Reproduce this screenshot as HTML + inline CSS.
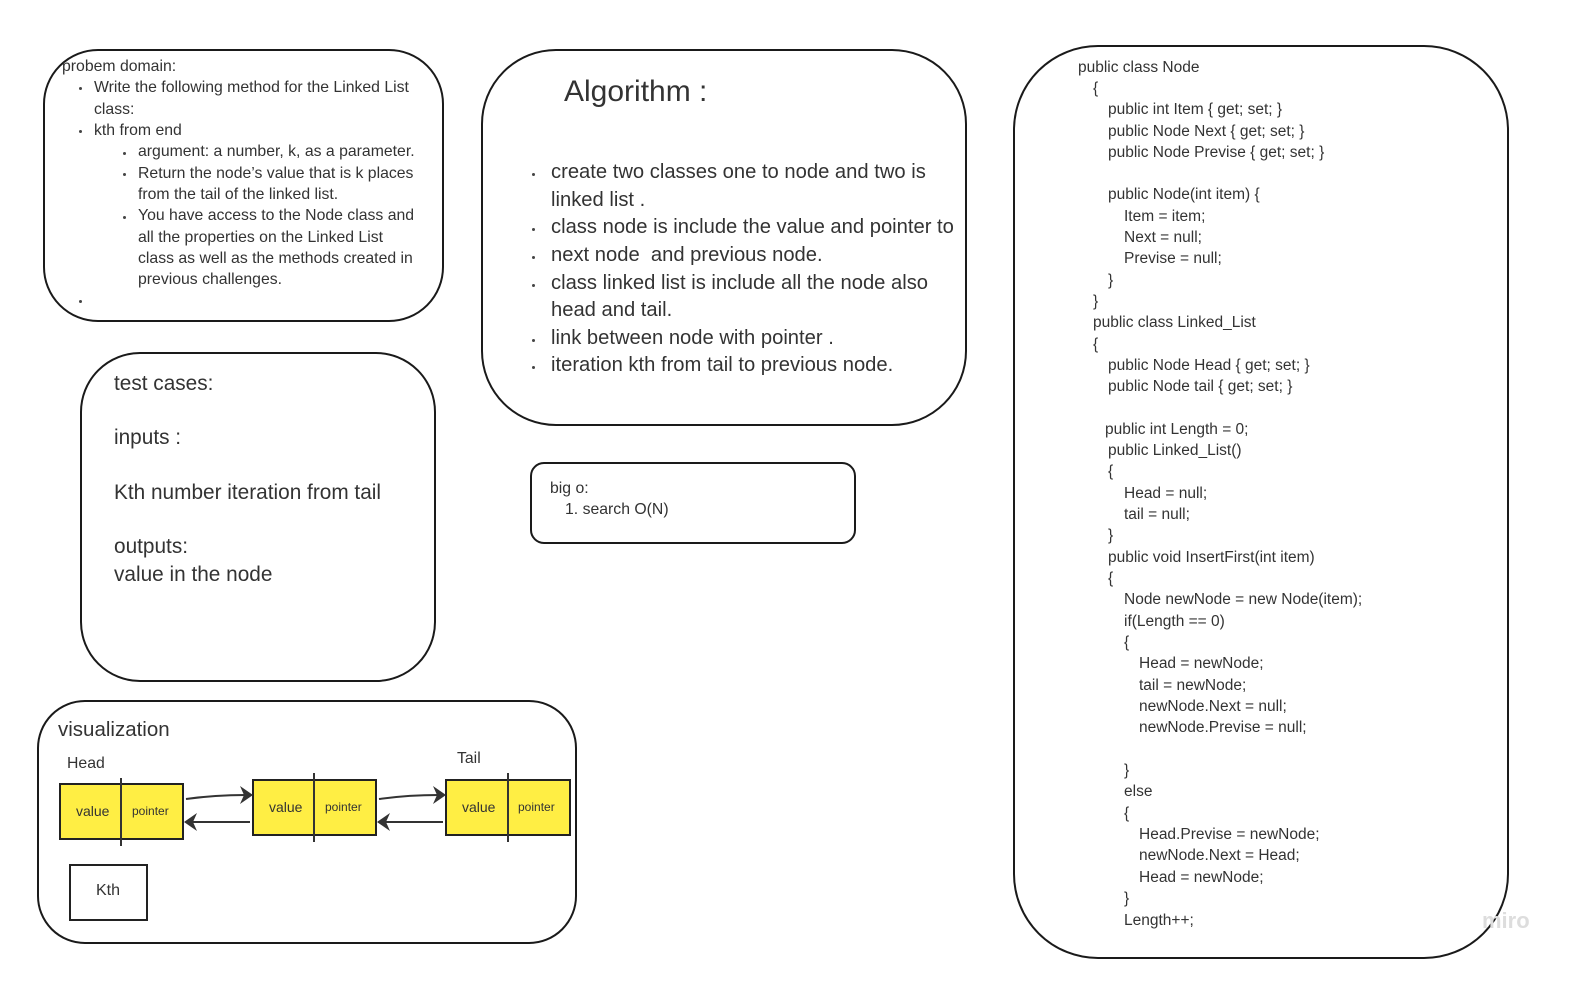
<!DOCTYPE html><html><head><style>
html,body{margin:0;padding:0;width:1591px;height:981px;overflow:hidden}
body{background:#fff;font-family:"Liberation Sans",sans-serif;color:#333}
#w{position:relative;width:1591px;height:981px;overflow:hidden}
.b{position:absolute;border:2px solid #1a1a1a;box-sizing:border-box}
.t{position:absolute;white-space:nowrap;line-height:1.15}
.c{font-size:15.5px;color:#333}
.s{font-size:15.8px}
.a{font-size:20.2px}
.e{font-size:20.8px}
.d{position:absolute;width:3px;height:3px;border-radius:50%;background:#444}
.cell{position:absolute;background:#ffee44;border:2px solid #222;box-sizing:border-box}
</style></head><body><div id="w">
<div class="b" style="left:43px;top:49px;width:401px;height:273px;border-radius:55px"></div>
<div class="b" style="left:481px;top:49px;width:486px;height:377px;border-radius:75px"></div>
<div class="b" style="left:1013px;top:45px;width:496px;height:914px;border-radius:85px"></div>
<div class="b" style="left:80px;top:352px;width:356px;height:330px;border-radius:60px"></div>
<div class="b" style="left:530px;top:462px;width:326px;height:82px;border-radius:14px"></div>
<div class="b" style="left:37px;top:700px;width:540px;height:244px;border-radius:48px"></div>

<div class="t s" style="left:62px;top:58px">probem domain:</div>
<div class="d" style="left:79px;top:87px"></div>
<div class="t s" style="left:94px;top:79px">Write the following method for the Linked List</div>
<div class="t s" style="left:94px;top:101px">class:</div>
<div class="d" style="left:79px;top:130px"></div>
<div class="t s" style="left:94px;top:122px">kth from end</div>
<div class="d" style="left:123px;top:152px"></div>
<div class="t s" style="left:138px;top:143px">argument: a number, k, as a parameter.</div>
<div class="d" style="left:123px;top:173px"></div>
<div class="t s" style="left:138px;top:165px">Return the node’s value that is k places</div>
<div class="t s" style="left:138px;top:186px">from the tail of the linked list.</div>
<div class="d" style="left:123px;top:216px"></div>
<div class="t s" style="left:138px;top:207px">You have access to the Node class and</div>
<div class="t s" style="left:138px;top:229px">all the properties on the Linked List</div>
<div class="t s" style="left:138px;top:250px">class as well as the methods created in</div>
<div class="t s" style="left:138px;top:271px">previous challenges.</div>
<div class="d" style="left:79px;top:300px"></div>

<div class="t" style="left:564px;top:75px;font-size:30px">Algorithm :</div>
<div class="d" style="left:532px;top:173px"></div>
<div class="t a" style="left:551px;top:161px">create two classes one to node and two is</div>
<div class="t a" style="left:551px;top:189px">linked list .</div>
<div class="d" style="left:532px;top:228px"></div>
<div class="t a" style="left:551px;top:216px">class node is include the value and pointer to</div>
<div class="d" style="left:532px;top:256px"></div>
<div class="t a" style="left:551px;top:244px">next node&nbsp; and previous node.</div>
<div class="d" style="left:532px;top:284px"></div>
<div class="t a" style="left:551px;top:272px">class linked list is include all the node also</div>
<div class="t a" style="left:551px;top:299px">head and tail.</div>
<div class="d" style="left:532px;top:339px"></div>
<div class="t a" style="left:551px;top:327px">link between node with pointer .</div>
<div class="d" style="left:532px;top:366px"></div>
<div class="t a" style="left:551px;top:354px">iteration kth from tail to previous node.</div>

<div class="t e" style="left:114px;top:372px">test cases:</div>
<div class="t e" style="left:114px;top:426px">inputs :</div>
<div class="t e" style="left:114px;top:481px">Kth number iteration from tail</div>
<div class="t e" style="left:114px;top:535px">outputs:</div>
<div class="t e" style="left:114px;top:563px">value in the node</div>

<div class="t s" style="left:550px;top:480px">big o:</div>
<div class="t s" style="left:565px;top:501px">1. search O(N)</div>

<div class="t" style="left:58px;top:718px;font-size:20.5px">visualization</div>
<div class="t s" style="left:67px;top:755px">Head</div>
<div class="t s" style="left:457px;top:750px">Tail</div>
<div class="cell" style="left:59px;top:783px;width:125px;height:57px"></div>
<div class="cell" style="left:252px;top:779px;width:125px;height:57px"></div>
<div class="cell" style="left:445px;top:779px;width:126px;height:57px"></div>
<div class="t" style="left:76px;top:803px;font-size:14px">value</div>
<div class="t" style="left:132px;top:805px;font-size:12px">pointer</div>
<div class="t" style="left:269px;top:799px;font-size:14px">value</div>
<div class="t" style="left:325px;top:801px;font-size:12px">pointer</div>
<div class="t" style="left:462px;top:799px;font-size:14px">value</div>
<div class="t" style="left:518px;top:801px;font-size:12px">pointer</div>
<svg style="position:absolute;left:0;top:0;display:block" width="1591" height="981">
<g stroke="#333" stroke-width="2" fill="none">
<line x1="121" y1="778" x2="121" y2="846"/><line x1="314" y1="773" x2="314" y2="842"/><line x1="508" y1="773" x2="508" y2="842"/>
<path d="M186 799 Q215 795 246 795"/><path d="M379 799 Q408 795 439 795"/>
<line x1="250" y1="822" x2="190" y2="822"/><line x1="443" y1="822" x2="383" y2="822"/>
</g>
<g fill="#333">
<polygon points="253,795 240,786 244,795 240,804"/><polygon points="446,795 433,786 437,795 433,804"/>
<polygon points="184,822 197,813 193,822 197,831"/><polygon points="377,822 390,813 386,822 390,831"/>
</g>
<rect x="70" y="865" width="77" height="55" fill="none" stroke="#222" stroke-width="2"/>
</svg>
<div class="t" style="left:96px;top:882px;font-size:16px">Kth</div>

<div class="t c" style="left:1078px;top:59px">public class Node</div>
<div class="t c" style="left:1093px;top:80px">{</div>
<div class="t c" style="left:1108px;top:101px">public int Item { get; set; }</div>
<div class="t c" style="left:1108px;top:123px">public Node Next { get; set; }</div>
<div class="t c" style="left:1108px;top:144px">public Node Previse { get; set; }</div>
<div class="t c" style="left:1108px;top:186px">public Node(int item) {</div>
<div class="t c" style="left:1124px;top:208px">Item = item;</div>
<div class="t c" style="left:1124px;top:229px">Next = null;</div>
<div class="t c" style="left:1124px;top:250px">Previse = null;</div>
<div class="t c" style="left:1108px;top:272px">}</div>
<div class="t c" style="left:1093px;top:293px">}</div>
<div class="t c" style="left:1093px;top:314px">public class Linked_List</div>
<div class="t c" style="left:1093px;top:336px">{</div>
<div class="t c" style="left:1108px;top:357px">public Node Head { get; set; }</div>
<div class="t c" style="left:1108px;top:378px">public Node tail { get; set; }</div>
<div class="t c" style="left:1105px;top:421px">public int Length = 0;</div>
<div class="t c" style="left:1108px;top:442px">public Linked_List()</div>
<div class="t c" style="left:1108px;top:463px">{</div>
<div class="t c" style="left:1124px;top:485px">Head = null;</div>
<div class="t c" style="left:1124px;top:506px">tail = null;</div>
<div class="t c" style="left:1108px;top:527px">}</div>
<div class="t c" style="left:1108px;top:549px">public void InsertFirst(int item)</div>
<div class="t c" style="left:1108px;top:570px">{</div>
<div class="t c" style="left:1124px;top:591px">Node newNode = new Node(item);</div>
<div class="t c" style="left:1124px;top:613px">if(Length == 0)</div>
<div class="t c" style="left:1124px;top:634px">{</div>
<div class="t c" style="left:1139px;top:655px">Head = newNode;</div>
<div class="t c" style="left:1139px;top:677px">tail = newNode;</div>
<div class="t c" style="left:1139px;top:698px">newNode.Next = null;</div>
<div class="t c" style="left:1139px;top:719px">newNode.Previse = null;</div>
<div class="t c" style="left:1124px;top:762px">}</div>
<div class="t c" style="left:1124px;top:783px">else</div>
<div class="t c" style="left:1124px;top:805px">{</div>
<div class="t c" style="left:1139px;top:826px">Head.Previse = newNode;</div>
<div class="t c" style="left:1139px;top:847px">newNode.Next = Head;</div>
<div class="t c" style="left:1139px;top:869px">Head = newNode;</div>
<div class="t c" style="left:1124px;top:890px">}</div>
<div class="t c" style="left:1124px;top:912px">Length++;</div>
<div class="t" style="left:1482px;top:908px;font-size:22px;color:#ddd;font-weight:bold">miro</div>
</div></body></html>
